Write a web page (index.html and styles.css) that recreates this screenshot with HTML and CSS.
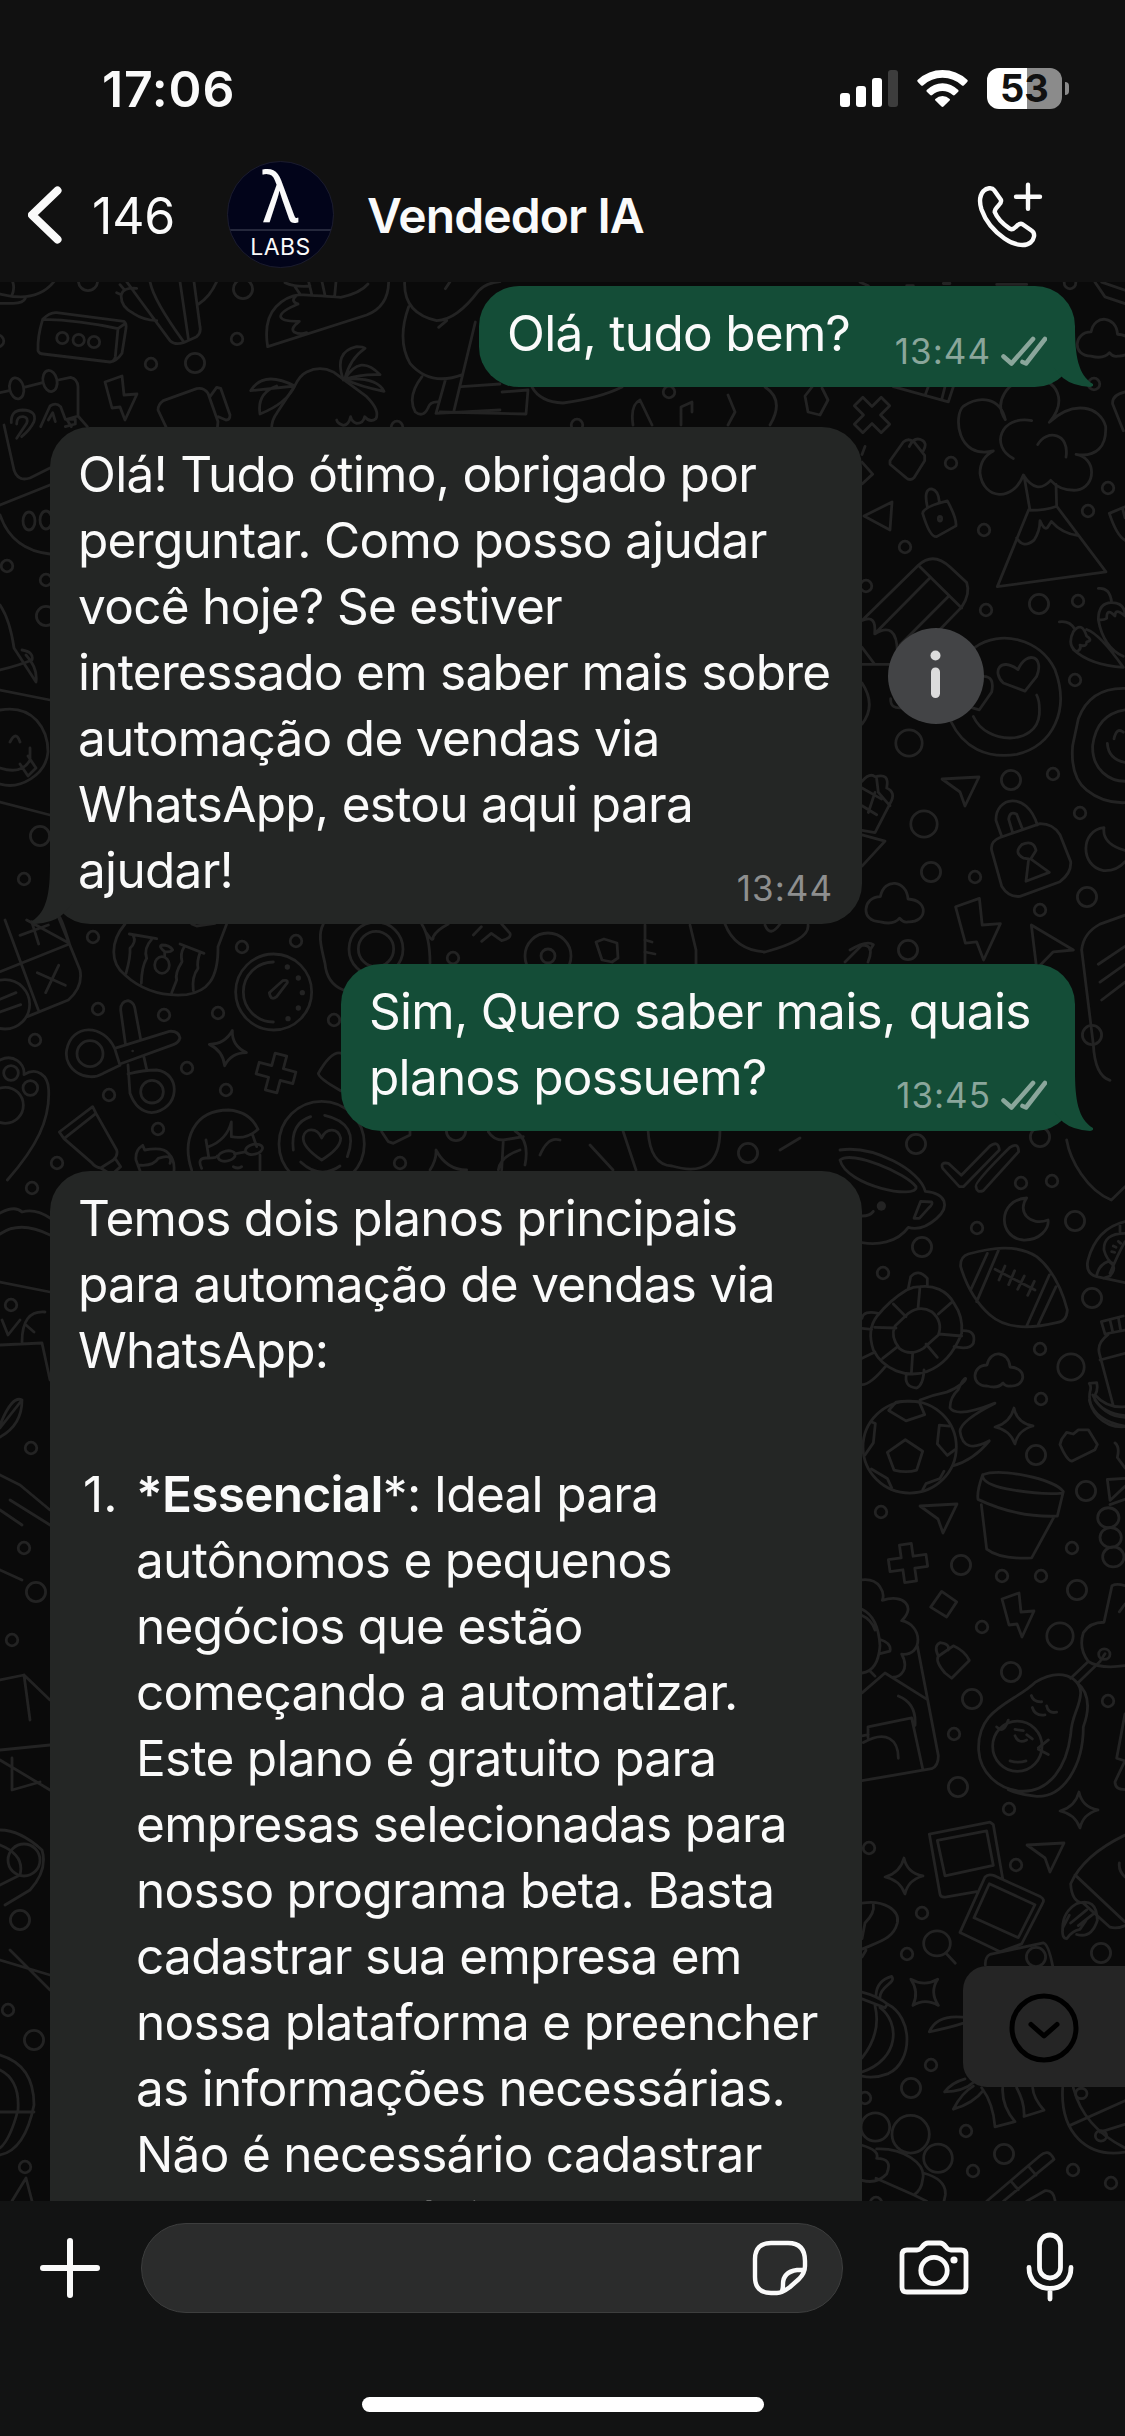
FILE: index.html
```html
<!DOCTYPE html>
<html lang="pt-BR">
<head>
<meta charset="utf-8">
<title>Vendedor IA</title>
<link rel="stylesheet" href="styles.css">
</head>
<body>
<div class="top">
  <div class="status">
    <span class="clock">17:06</span>
    <div class="status-icons">
      <svg class="signal" viewBox="0 0 58 37"><rect x="0" y="23" width="10" height="14" rx="3"/><rect x="16" y="16" width="10" height="21" rx="3"/><rect x="32" y="8" width="10" height="29" rx="3"/><rect x="48" y="0" width="10" height="37" rx="3" fill="#3d3d3d"/></svg>
      <svg class="wifi" viewBox="0 0 51 37"><path d="M.8 9.8Q-.3 10.8.8 12L4.200 15.400Q5.200 16.200 6.300 15.200Q14.300 7.700 25.500 7.700T44.700 15.200Q45.800 16.200 46.800 15.400L50.200 12Q51.300 10.800 50.200 9.800Q39.500 0 25.500 0T.8 9.800Z"/><path d="M9.700 20.100Q9 21 9.800 21.800L13.200 25.100Q14.200 25.900 15.200 25Q19.700 21 25.500 21T35.800 25Q36.800 25.900 37.800 25.100L41.200 21.800Q42 21 41.300 20.100Q34.300 13.200 25.500 13.200T9.700 20.100Z"/><path d="M18.300 28.900Q17.700 29.900 18.400 30.600L24.500 36.500Q25.500 37.300 26.500 36.500L32.600 30.600Q33.300 29.900 32.700 28.900Q29.500 26 25.500 26T18.300 28.900Z"/></svg>
      <div class="battery"><span>53</span></div>
    </div>
  </div>
  <header class="header">
    <svg class="back" viewBox="0 0 34 58"><path d="M29.500 4.500 4 29 29.500 53.500"/></svg>
    <span class="count">146</span>
    <div class="avatar"><span class="lambda">λ</span><span class="labs">LABS</span></div>
    <h1>Vendedor IA</h1>
    <svg class="call" viewBox="0 0 66 66"><path d="M6.500 9C9.500 6 15 5 17 8L23.700 17.500C26.500 22 17.500 24.500 17.700 30C20.500 37 27 42.800 33 46.800C38.500 49.500 40 39.500 45.500 42.200L54.500 48.500C59 51.500 57 57.500 53.500 60.500C47.500 65.500 36 62.500 27.500 56.500C17.500 49.500 8.500 39 4.500 27.500C2.300 20.500 2.200 14 6.500 9ZM51 2.700V26.700M39 14.800H63"/></svg>
  </header>
</div>

<main class="chat">
  <svg class="wallpaper" viewBox="0 282 1125 1919">
    <defs>
      <circle id="s" r="5.800"/><circle id="m" r="9.600"/><circle id="l" r="13.200"/>
      <path id="star" d="M0-18Q3-3 19 0Q4 4 1 18Q-4 4-19 1Q-4-3 0-18Z"/>
      <path id="plus" d="M-6-19H6V-6H19V6H6V19H-6V6H-19V-6H-6Z"/>
      <path id="cloud" d="M-13 14C-30 14-28-7-13-7C-10-23 9-21 10-5C28-4 26 15 10 14Q6 15 3 11Q-2 17-13 14Z"/>
      <path id="bolt" d="M-16-18 1-24 3-5 16-6 4 20-1 7-9 8Z"/>
      <path id="plane" d="M-19-11 18-13 4 16-1 2Z"/>
    </defs>
    <g>
      <use href="#s" x="951" y="463"/><use href="#s" x="905" y="547"/><use href="#s" x="984" y="530"/><use href="#s" x="1108" y="488"/><use href="#s" x="1088" y="511"/><use href="#s" x="866" y="586"/><use href="#s" x="986" y="610"/><use href="#s" x="1078" y="601"/><use href="#m" x="1039" y="604"/><use href="#s" x="1075" y="680"/><use href="#l" x="909" y="743"/><use href="#m" x="1011" y="780"/><use href="#s" x="1053" y="774"/><use href="#s" x="1080" y="813"/><use href="#l" x="924" y="824"/><use href="#m" x="931" y="872"/><use href="#s" x="975" y="877"/><use href="#m" x="1087" y="897"/><use href="#s" x="1040" y="910"/><use href="#m" x="908" y="950"/><use href="#s" x="1094" y="384"/><use href="#s" x="1070" y="283"/>
      <use href="#m" x="916" y="1144"/><use href="#m" x="1040" y="1137"/><use href="#s" x="1021" y="1183"/><use href="#s" x="1052" y="1181"/><use href="#m" x="1075" y="1221"/><use href="#s" x="977" y="1228"/><use href="#m" x="922" y="1247"/><use href="#s" x="883" y="1273"/><use href="#m" x="1092" y="1298"/><use href="#s" x="1040" y="1349"/><use href="#l" x="1071" y="1367"/><use href="#s" x="1041" y="1399"/><use href="#m" x="1092" y="1035"/>
      <use href="#m" x="1036" y="1455"/><use href="#m" x="1086" y="1491"/><use href="#s" x="881" y="1512"/><use href="#m" x="961" y="1565"/><use href="#s" x="1072" y="1548"/><use href="#s" x="1002" y="1576"/><use href="#s" x="1041" y="1576"/><use href="#m" x="1077" y="1590"/><use href="#s" x="982" y="1627"/><use href="#l" x="1060" y="1636"/><use href="#m" x="1011" y="1672"/><use href="#m" x="972" y="1699"/><use href="#s" x="1108" y="1701"/><use href="#s" x="954" y="1734"/><use href="#m" x="958" y="1787"/><use href="#s" x="1009" y="1809"/><use href="#s" x="869" y="1848"/><use href="#s" x="1016" y="1865"/><use href="#s" x="922" y="1913"/><use href="#s" x="907" y="1954"/><use href="#m" x="1101" y="1953"/><use href="#s" x="931" y="2065"/><use href="#m" x="911" y="2088"/><use href="#s" x="865" y="2098"/><use href="#s" x="966" y="2131"/><use href="#m" x="1004" y="2154"/><use href="#s" x="973" y="2171"/><use href="#s" x="1073" y="2170"/><use href="#s" x="1111" y="2183"/><use href="#m" x="1036" y="1957"/><use href="#s" x="876" y="2203"/>
      <use href="#s" x="93" y="937"/><use href="#s" x="242" y="947"/><use href="#s" x="296" y="941"/><use href="#s" x="453" y="958"/><use href="#s" x="98" y="1009"/><use href="#s" x="164" y="1015"/><use href="#s" x="218" y="1013"/><use href="#s" x="334" y="1020"/><use href="#s" x="35" y="1040"/><use href="#s" x="187" y="1068"/><use href="#s" x="226" y="1090"/><use href="#s" x="109" y="1095"/><use href="#s" x="158" y="1129"/><use href="#s" x="400" y="1163"/><use href="#s" x="57" y="1163"/><use href="#m" x="748" y="1153"/><use href="#m" x="456" y="1131"/>
      <use href="#m" x="88" y="281"/><use href="#m" x="243" y="289"/><use href="#s" x="237" y="339"/><use href="#s" x="151" y="364"/><use href="#m" x="195" y="363"/><use href="#s" x="-2" y="341"/><use href="#s" x="669" y="392"/><use href="#s" x="397" y="427"/><use href="#s" x="577" y="425"/><use href="#s" x="7" y="566"/><use href="#s" x="24" y="879"/><use href="#m" x="40" y="836"/><use href="#m" x="46" y="616"/><use href="#s" x="46" y="580"/><use href="#s" x="32" y="1188"/><use href="#s" x="11" y="1305"/><use href="#s" x="31" y="1448"/><use href="#s" x="24" y="1548"/><use href="#m" x="36" y="1592"/><use href="#s" x="12" y="1640"/><use href="#m" x="20" y="1920"/><use href="#s" x="8" y="2010"/><use href="#s" x="25" y="2167"/><use href="#m" x="34" y="2040"/>
      <use href="#star" x="1014" y="1426"/><use href="#star" x="1079" y="1810"/><use href="#star" x="904" y="1876"/><use href="#star" transform="translate(228 1048) rotate(14)"/><use href="#star" transform="translate(925 1992) rotate(45)"/>
      <use href="#plus" transform="translate(276 1073) rotate(15)"/><use href="#plus" transform="translate(908 1563) rotate(-8)"/><use href="#plus" transform="translate(872 415) rotate(45)"/>
      <use href="#cloud" transform="translate(1000 1372)"/><use href="#cloud" transform="translate(896 905) scale(1.200)"/><use href="#cloud" transform="translate(1106 340) scale(1.150)"/>
      <use href="#bolt" transform="translate(121 400)"/><use href="#bolt" transform="translate(1018 1617)"/><use href="#bolt" transform="translate(978 932) scale(1.400)"/>
      <use href="#plane" x="961" y="790"/><use href="#plane" transform="translate(1046 1856)"/><use href="#plane" transform="translate(939 1517)"/><path d="M864 516 892 502 890 530Z"/>
    </g>

    <!-- upper left doodles -->
    <g transform="translate(0 280) scale(.33333)">
      <path d="M128 118Q112 170 114 212Q118 222 130 222L330 246Q344 244 346 230L354 146Q240 120 128 118Q150 96 170 98L372 124Q380 130 378 145L366 220Q350 244 330 246M354 146 376 130"/>
      <circle cx="187" cy="174" r="17"/><circle cx="236" cy="180" r="17"/><circle cx="282" cy="186" r="17"/>
      <path d="M0 338 28 332M72 322 128 308M175 300 212 292Q232 296 234 320V408L262 440M234 408 200 418 214 440"/>
      <ellipse cx="50" cy="325" rx="21" ry="32" transform="rotate(-12 50 325)"/><ellipse cx="150" cy="303" rx="21" ry="32" transform="rotate(-12 150 303)"/>
      <path d="M34 428Q32 390 68 390Q112 392 102 425Q90 450 65 470M50 432Q50 408 70 410Q86 412 80 430L50 475M122 440 150 378Q168 366 182 380L196 418H226V432L196 440M145 420 158 398 166 425"/>
      <path d="M500 445 474 390Q474 374 490 362L590 326Q612 322 624 340L654 425 652 445M630 350 650 322 662 325 690 405Q690 420 678 420L655 410"/>
      <path d="M380 5 420 60 510 182Q525 196 550 188L590 170Q604 158 600 140L582 5M450 5Q460 60 550 184M540 5 565 176M350 38 364 44Q360 80 400 100 430 120 470 122M364 44Q370 22 410 25M372 28 360 14M596 72Q630 50 650 5"/>
      <path d="M803 200Q790 120 828 80Q860 48 900 44Q1000 50 1022 52Q1080 40 1104 12M803 200 1100 105Q1165 80 1166 5M894 72Q870 64 888 48M894 72Q840 95 842 110T898 124Q870 145 882 156Q900 165 920 158M855 8Q885 22 930 18M885 20 900 42M926 5 935 42M966 5 975 46M1008 5 1004 48"/>
      <path d="M815 445Q815 420 830 400L884 318Q900 285 920 276Q960 256 1000 276L1100 350Q1140 390 1128 416 1110 430 1094 410 1090 430 1070 430 1055 425 1052 410 1046 436 1030 436 1012 430 1010 420"/>
      <path d="M884 318Q790 270 752 332Q820 325 884 318Q860 370 780 402Q770 340 830 318M1030 300Q1000 215 1070 200 1090 200 1095 205Q1050 235 1034 298M1034 298Q1080 220 1140 284Q1080 282 1034 298Q1130 290 1152 334Q1080 320 1034 298"/>
      <path d="M1214 5Q1210 100 1310 122Q1370 120 1436 32Q1460 8 1500 5M1226 80Q1190 180 1230 250Q1290 320 1388 284M1426 126 1362 392M1340 122 1316 142M1384 320 1500 312M1336 300 1308 400 1500 390M1266 290Q1220 350 1246 396 1270 414 1284 384 1290 364 1316 366M1350 5 1336 26"/>
      <path d="M0 70H40Q70 70 76 55M0 42Q110 70 162 5M38 5Q45 25 36 45"/>
    </g>
    <!-- doodles under the first message -->
    <path d="M502 392 528 390 526 414 440 412M532 387Q540 402 563 403 600 398 622 387M633 425Q630 405 640 400L652 425M681 425V407L692 402V412M728 425 735 412 728 395M765 387Q785 400 770 425M812 387 805 396 808 412 820 415 828 400 822 388"/>

    <!-- left strip beside the first reply -->
    <g>
      <path d="M0 505 50 485M0 515Q12 550 50 554"/><ellipse cx="29" cy="521" rx="6" ry="9"/><ellipse cx="46" cy="520" rx="6" ry="9"/>
      <path d="M4 425 14 470Q18 482 30 478L50 468M0 605Q10 620 14 648L36 682Q38 668 26 655M0 670Q20 665 32 660 34 652 22 650M0 690 50 700M0 710C34 704 48 730 48 752C46 775 20 790 0 784M0 768Q22 775 30 760V748M10 742Q16 730 20 742M20 764 28 776 36 768 28 756M0 802 50 815"/>
    </g>

    <!-- doodles between the first reply and the second message -->
    <g transform="translate(0 920) scale(.33333)">
      <path d="M15 0 115 270M80 0 208 70Q180-20 175-10L240 150Q250 200 205 240L82 290M0 155 208 72M60 46 145 15M95 5 116 72M112 158 196 196M176 136 137 218M0 238 48 218M0 276 62 254"/>
      <circle cx="15" cy="253" r="74"/>
      <path d="M375 12C330 65 330 130 375 165C430 215 490 230 560 224C620 215 655 180 654 80L680 12M388 42 470 56M400 48Q410 65 390 85 392 110 378 160M455 58Q430 85 440 115 425 140 424 190M540 72 612 100M552 82Q540 100 546 125 524 160 530 180L515 218M600 98Q590 125 594 145 575 170 580 212M575 12 590 18 645 10"/>
      <ellipse cx="486" cy="135" rx="22" ry="25"/><path d="M494 110V95Q475 80 485 75 510 75 518 90 510 98 494 95"/>
      <circle cx="821" cy="216" r="114"/><path d="M820 126A90 90 0 0 0 820 306M808 218 848 182Q864 178 862 188L830 230Q812 244 808 218Z"/>
      <g class="solid"><circle cx="862" cy="141" r="8"/><circle cx="895" cy="174" r="8"/><circle cx="907" cy="218" r="8"/><circle cx="895" cy="264" r="8"/><circle cx="864" cy="296" r="8"/><circle cx="398" cy="393" r="4"/></g>
      <path d="M344 385 508 334Q536 332 540 354 536 368 520 374L360 432M376 370 362 270Q362 244 384 242 400 246 404 262L422 358M384 435 390 520Q410 575 455 578C540 570 545 460 470 450Q430 450 384 462M432 412 440 448M344 385C310 310 215 310 200 390C190 450 260 490 310 460L360 436Z"/>
      <circle cx="270" cy="401" r="39"/><circle cx="456" cy="515" r="34"/>
      <circle cx="33" cy="459" r="22"/><circle cx="91" cy="504" r="22"/><circle cx="16" cy="556" r="54"/><path d="M0 420C40 400 75 430 72 464C110 440 145 465 146 510C150 600 110 680 22 780M178 636 278 560 288 580 192 656ZM288 580 350 690Q355 705 340 720L302 744Q285 742 275 728L192 656M345 715 362 740 345 755M302 744 320 755M408 720Q405 690 428 676L434 690Q490 680 505 700 525 720 522 752M408 720 420 752M415 735Q460 740 475 715 520 700 510 730"/>
      <path d="M575 750C545 660 580 570 686 570Q750 575 774 628 740 660 694 650V606Q680 660 626 680M618 660 626 710M758 645 770 680M780 705V750M605 745Q590 715 618 714 650 715 652 708"/><ellipse cx="680" cy="708" rx="26" ry="15" transform="rotate(-12 680 708)"/><ellipse cx="762" cy="688" rx="26" ry="15" transform="rotate(-12 762 688)"/><path d="M704 702 736 696M700 740Q715 748 725 740"/>
      <circle cx="965" cy="672" r="128"/><path d="M880 690Q870 610 932 590M974 586Q1080 610 1042 710M902 726Q960 780 1020 738M965 720Q905 680 910 650C915 625 950 620 965 654C980 620 1015 625 1022 655Q1022 685 965 720Z"/>
      <path d="M1030 210Q980 190 975 130C960 70 955 40 970 12M1265 12Q1290 50 1290 130M1280 40Q1300 70 1300 50 1310 30 1345 12"/><circle cx="1128" cy="87" r="81"/><circle cx="1128" cy="87" r="53"/>
      <path d="M1420 45 1444 20M1445 64 1474 40 1505 62Q1535 55 1530 40L1505 12M1025 400Q995 390 955 460 955 475 1022 512M1145 635 1165 665 1180 670 1230 645V632M1290 750Q1310 720 1308 690 1340 750 1400 750M1465 635Q1480 660 1510 660L1570 650M1510 660 1505 750M1495 750Q1500 710 1560 690"/>
    </g>
    <g>
      <path d="M515 1131Q530 1140 525 1165M540 1155Q548 1136 560 1140M590 1145 613 1170M623 1131 636 1170M648 1130Q650 1165 672 1166 720 1180 720 1130M780 1150 800 1138M725 924Q735 950 765 952 810 940 808 925M690 925 696 950 696 964M645 940 652 942M645 952 655 954M845 962 862 945Q875 945 868 962M765 925Q770 938 780 924"/>
      <circle cx="548" cy="956" r="23"/><circle cx="548" cy="956" r="7"/><path d="m596 942 8-3 13 4 1 15-6 4-10-2ZM645 966V925"/>
    </g>

    <!-- right column beside the first reply -->
    <g transform="translate(840 250) scale(.33333 .44643)">
      <path d="M460 450C350 470 340 370 370 350C420 325 480 330 496 380C460 340 500 295 570 285C660 290 680 340 628 386C700 335 780 350 797 395C800 440 770 465 708 458C770 465 770 530 710 538Q660 540 632 516Q590 550 550 504C520 565 430 560 420 500Q420 465 460 450M520 467C450 440 480 370 575 382M593 436C620 400 690 410 678 464M552 505 570 583Q620 583 650 574L648 525M566 582 472 754 798 721 650 574M530 645Q550 670 582 650 600 630 600 606 612 628 622 622L634 608Q665 635 715 640M150 472 190 430Q205 420 222 430L254 460 254 472 222 510Q210 518 198 510L150 480ZM208 440Q220 420 240 424 265 430 250 450M66 524 98 502 66 475M66 458 75 440M248 590Q250 575 322 562Q350 600 348 618L290 642Q270 645 248 590ZM262 575Q250 535 275 535 295 538 298 564M850 405 818 345Q815 325 855 318"/>
      <circle cx="300" cy="602" r="5"/>
      <path d="M66 830 235 706Q280 675 330 710L380 745Q392 770 365 800L280 865M235 706 365 802M110 855 268 736M180 885 325 776M66 830Q110 815 104 860Q170 830 172 900M66 928H260M66 890 104 928M152 1005Q150 1030 190 1025M66 970Q110 1020 66 1062"/>
      <path d="M405 890C480 850 600 870 645 940C690 1030 640 1110 530 1130C440 1140 370 1115 332 1055M555 988 490 970C455 945 480 910 534 940C560 895 615 910 590 955ZM400 1045C440 1110 590 1110 598 1040Q600 1010 590 997M430 955Q465 955 455 990L418 1030 395 1025"/>
      <path d="M658 833Q690 830 705 850M740 865Q725 830 700 855 680 885 710 900 725 895 720 885 740 890 740 878 760 875 740 865M740 850Q780 860 850 935Q750 930 700 895M775 758Q810 755 815 790M775 828Q775 790 815 790 855 790 855 820 825 800 825 820 800 800 800 825 790 830 775 828Q790 890 850 910M808 590 855 575M808 590Q830 640 855 650M848 580 855 600M855 982Q750 980 715 1050L698 1110Q690 1180 740 1210 790 1240 855 1238M855 1030Q770 1040 758 1110C755 1165 810 1190 855 1190M802 1105Q805 1140 855 1148M822 1095Q830 1068 850 1080"/>
      <path d="M66 1190Q90 1170 105 1180 150 1170 140 1205 170 1215 150 1240L105 1305 66 1300M66 1205 125 1230M66 1245 110 1265M105 1215 85 1260M110 1185 115 1215 150 1245M66 1310 135 1324 66 1380"/>
      <path d="M485 1313 468 1278C465 1225 560 1210 592 1288M518 1305 506 1275Q510 1255 530 1264L548 1298M455 1345Q450 1325 480 1316L600 1285Q640 1285 660 1310L692 1370Q695 1395 660 1415L540 1448Q505 1450 485 1425ZM550 1362Q520 1350 545 1332 580 1320 588 1345L572 1364 628 1394 558 1414 566 1364Z"/>
      <path d="M792 1294C720 1300 720 1380 790 1390Q830 1392 855 1370M792 1294Q785 1330 855 1345M590 1610 574 1512 700 1568 640 1572ZM725 1568Q730 1530 780 1510L855 1490M725 1568 760 1780Q765 1850 810 1860M775 1600 855 1560M780 1640 855 1600M785 1680 855 1640M30 1568Q80 1545 100 1556L90 1568"/>
      <path d="M160 306 325 340 340 306M255 326 265 306M305 335 315 306M765 72 795 105 855 120M785 72 855 90M60 72 85 80M200 80H220M310 75H330M470 77H560"/>
    </g>

    <!-- right column beside the plans reply -->
    <g transform="translate(840 1140) scale(.33333)">
      <path d="M0 30C100 15 240 90 256 154C320 160 330 200 290 235Q245 275 205 262C170 310 110 315 66 308M242 184 275 186Q280 192 265 205L238 235H222ZM0 60C35 30 200 100 228 140C235 180 20 140 0 60M66 228Q90 228 100 214"/>
      <circle cx="124" cy="198" r="14" class="solid"/>
      <path d="M308 85Q300 65 325 70L364 106 450 18Q475 0 478 30L370 140 358 140ZM408 140Q400 130 510 22 535 5 536 35L430 152Q410 160 408 140ZM560 174C470 180 475 295 550 300C600 302 628 265 624 240C570 260 530 215 560 174ZM680 0C690 60 740 150 814 180L855 140"/>
      <path d="M362 380Q360 350 385 342C450 325 530 310 590 350C640 390 665 445 682 510Q680 545 650 548C580 565 500 570 450 525C410 490 380 440 362 380ZM442 340 392 450M475 332 410 485M628 405 560 558M648 440 595 553M465 388 585 450M495 378 477 420M524 392 506 434M553 408 533 448M583 424 563 466"/>
      <path d="M240 440C280 435 320 450 342 490Q370 530 365 580Q330 670 260 695C200 715 130 690 100 630Q80 570 110 530Q150 480 200 450 220 440 240 440ZM205 520Q240 495 275 515 310 545 295 585L250 625Q210 650 178 625 150 590 165 558ZM240 440 234 505M160 492 198 530M334 488 295 522M104 562 168 564M365 588 296 582M128 655 170 622M292 652 258 612M214 702 218 640M205 445 212 410Q235 385 262 415V440M366 572Q410 570 400 610 390 630 342 620M200 700Q190 740 230 744 250 735 252 690M115 520Q70 510 66 535M66 565 95 568M66 655 105 636M66 734Q90 735 136 680"/>
      <path d="M855 245Q770 265 744 360 735 400 770 410L855 428M855 280Q790 280 792 330 800 360 820 372M770 408Q775 375 805 364 835 380 810 408L790 415M855 305Q835 340 810 400M840 275V250M820 318 828 322M815 335 824 337M835 304 842 310"/>
      <path d="M784 545 850 528M784 545 795 582 855 570M810 540 818 575M835 532 842 572M804 584Q770 610 778 640L820 798M780 660 855 640M748 730 770 728Q775 750 765 765 800 805 855 800M748 730Q755 740 750 755C740 810 790 865 855 860M758 765Q790 830 855 832"/>
    </g>
    <g transform="translate(800 1400) scale(.33333 .52299)">
      <ellipse cx="329" cy="90" rx="140" ry="88"/><path d="M262 100 316 76 368 98 350 134Q320 140 282 134ZM266 20 318 40 374 28 358 4Q320 0 288 4ZM195 105 220 82 226 45 215 42M465 95 442 106 412 84 418 48 448 50M214 132 262 150 275 168M432 136 420 150 378 160 368 172"/>
      <path d="M360 0Q400-10 440-15C520-35 500-60 475-20Q450-5 450 15 470 35 585 6 480 40 480 60 490 105 568 78 520 115 458 126"/>
      <path d="M548 143Q530 175 534 190 650 225 772 222L790 175C760 150 600 130 548 143Q545 160 620 170 720 182 788 178M544 200 560 285Q600 305 695 302L760 226M785 75 800 62 820 65 835 57 865 57 892 85 885 95 815 117Q800 115 780 85Z"/>
      <ellipse cx="925" cy="225" rx="32" ry="19"/><ellipse cx="932" cy="263" rx="32" ry="19"/><ellipse cx="940" cy="300" rx="32" ry="19"/><path d="M975 150 922 152 930 192 975 165M868 0Q885 40 975 50M885 0Q910 25 975 30M945 82Q960 90 952 110L975 130M930 200 975 190"/>
      <path d="M425 366 470 386 440 415 392 396ZM186 344C240 340 255 370 247 383C310 370 350 395 305 422C370 430 370 490 305 486C330 515 300 530 280 530M186 400Q235 415 240 470C235 510 210 520 186 522M186 412Q215 420 225 440M240 458Q275 465 270 480L240 485M352 470 415 680Q415 700 395 705L186 728M210 518 225 528M186 560 255 522 380 572M295 566Q350 580 345 622M204 646V625L335 608 368 705M186 642 205 640M190 655C260 630 295 650 295 685 285 705 260 712L186 724M186 797 350 776Q360 785 335 800L186 820M185 442Q200 440 208 445M188 490Q205 488 208 482"/>
      <path d="M415 490Q405 500 435 522L455 532 508 498Q495 480 460 470ZM415 490Q400 470 420 464 450 466 445 478"/>
      <path d="M536 670C530 590 640 580 705 540C780 510 840 530 842 560C840 590 815 600 812 640C800 700 750 750 665 748C590 745 540 710 536 670ZM830 540C870 560 870 590 850 625C850 700 790 760 710 758Q660 755 625 745M812 532 865 500M835 540 900 500 915 485"/>
      <ellipse cx="652" cy="662" rx="74" ry="48"/><path d="M590 625Q610 640 625 612M645 630 670 632M645 642Q655 658 680 650M680 640 697 648M630 690Q655 695 678 690M715 665 745 650M715 668 745 678M694 565Q700 578 725 577M740 585Q745 600 770 597M697 588Q705 605 735 602M865 500Q835 475 850 445 870 425 912 425L936 355Q950 350 975 355M865 500Q900 515 975 508M958 405 975 390M975 600 950 685 975 690 945 730Q945 745 975 745"/><ellipse cx="913" cy="486" rx="17" ry="10"/>
      <path d="M388 830 570 807 580 812 608 915M388 830 420 945Q422 952 440 950L530 940M412 842 560 824 580 890 435 910ZM480 1018 555 912Q565 905 585 910L722 950Q735 955 728 962L665 1040 600 1055ZM522 990 568 925 705 965 655 1028ZM556 1080Q555 1065 570 1060L730 1038Q745 1040 758 1082"/>
      <path d="M975 832C900 855 840 885 812 925Q815 960 850 962L930 1008Q950 1012 975 1005M825 908 975 998M958 885Q955 900 975 912M788 1015Q785 980 830 963 890 950 892 995 875 1030 830 1022M800 1030Q785 1030 788 1010L808 985M800 1030Q815 1015 840 1012L858 995M812 1000 860 975M835 1005 885 980"/>
      <path d="M186 962C250 955 300 975 292 1000C280 1030 240 1035 186 1050M220 965Q225 980 195 1000L186 1030M198 1052 186 1065"/><ellipse cx="411" cy="1039" rx="40" ry="24"/><path d="M438 1058 466 1077"/>
      <path d="M186 1132Q235 1140 262 1155L255 1162 186 1145M228 1138Q230 1110 275 1102C290 1115 240 1120 240 1142M262 1155C340 1180 340 1265 265 1288Q225 1298 186 1293M225 1158Q245 1210 186 1258M240 1162C300 1190 300 1260 186 1285M388 1208Q410 1175 488 1180M388 1208Q450 1200 488 1192M434 1323Q455 1305 495 1298M434 1323Q490 1322 520 1305M460 1356Q485 1325 520 1312M460 1356Q520 1345 550 1320M545 1315Q580 1345 585 1390L645 1380Q605 1350 608 1315M650 1315Q675 1345 672 1370L732 1358Q700 1335 698 1315"/>
      <ellipse cx="226" cy="1390" rx="43" ry="27"/><ellipse cx="332" cy="1404" rx="56" ry="36"/><ellipse cx="414" cy="1450" rx="43" ry="27"/><path d="M186 1425Q240 1435 230 1450 280 1450 260 1480 230 1500 186 1492M230 1432C310 1430 380 1460 368 1490Q365 1510 342 1520L228 1488M370 1478Q440 1490 436 1520L432 1532M342 1520 380 1532M560 1532 720 1445Q745 1430 762 1452L610 1532M632 1493 655 1510M685 1465 708 1482M680 1532 735 1512Q760 1510 765 1530"/>
      <path d="M788 1315C780 1400 860 1450 975 1438M810 1387 975 1340M820 1315Q850 1390 975 1430M900 1400 975 1385"/><ellipse cx="844" cy="1326" rx="17" ry="10"/><ellipse cx="903" cy="1407" rx="17" ry="10"/>
    </g>

    <!-- left strip beside the plans reply -->
    <path d="M0 1213Q15 1205 22 1212 35 1208 50 1218M0 1234Q20 1220 50 1235M0 1282 50 1292M0 1345 42 1343 50 1380M2 1320 8 1335 20 1320M22 1342Q22 1310 45 1312M26 1325 34 1332M0 1425Q12 1395 22 1400 22 1425 0 1437M0 1428 22 1400M0 1475 20 1485 50 1510M0 1510 22 1525M10 1500 50 1525M0 1570 22 1580M0 1680 24 1675 30 1720M0 1750 50 1745M24 1675 50 1700M0 1760 50 1790M12 1758V1790L40 1782M0 1830Q20 1830 42 1850 48 1870 30 1890L5 1905M0 1845Q25 1855 20 1875L0 1885M0 1960 50 1975M10 1950 50 1990M0 2055Q34 2065 34 2105 25 2150 0 2155M0 2070Q20 2080 18 2110 10 2140 0 2148M0 2112H34M12 2201 26 2178 32 2201"/>
    <circle cx="24" cy="1860" r="16"/>
  </svg>

  <article class="bubble out first">
    <p>Olá, tudo bem?</p>
    <span class="meta">13:44<svg class="ticks" viewBox="0 0 46 30"><path d="M2.500 20.500 10.500 27.500 32 3M21.500 26 25 27.500 44 3"/></svg></span>
    <svg class="tail" viewBox="0 0 40 60"><path d="M22 0C22 28 25 48 40 57Q41 59.500 37 60Q20 59 10 51L0 40V0Z"/></svg>
  </article>

  <div class="row">
    <article class="bubble in">
      <p>Olá! Tudo ótimo, obrigado por<br>perguntar. Como posso ajudar<br>você hoje? Se estiver<br>interessado em saber mais sobre<br>automação de vendas via<br>WhatsApp, estou aqui para<br>ajudar!</p>
      <span class="meta">13:44</span>
      <svg class="tail" viewBox="0 0 40 60"><path d="M22 0C22 28 25 48 40 57Q41 59.500 37 60Q20 59 10 51L0 40V0Z"/></svg>
    </article>
    <div class="info"><svg viewBox="0 0 96 96"><circle cx="47.500" cy="27.500" r="5"/><rect x="43" y="39.500" width="9" height="30.500" rx="4.500"/></svg></div>
  </div>

  <article class="bubble out second">
    <p>Sim, Quero saber mais, quais<br>planos possuem?</p>
    <span class="meta">13:45<svg class="ticks" viewBox="0 0 46 30"><path d="M2.500 20.500 10.500 27.500 32 3M21.500 26 25 27.500 44 3"/></svg></span>
    <svg class="tail" viewBox="0 0 40 60"><path d="M22 0C22 28 25 48 40 57Q41 59.500 37 60Q20 59 10 51L0 40V0Z"/></svg>
  </article>

  <article class="bubble in plans">
    <p>Temos dois planos principais<br>para automação de vendas via<br>WhatsApp:</p>
    <div class="item">
      <span class="num">1.</span>
      <p><b>*Essencial</b>*: Ideal para<br>autônomos e pequenos<br>negócios que estão<br>começando a automatizar.<br>Este plano é gratuito para<br>empresas selecionadas para<br>nosso programa beta. Basta<br>cadastrar sua empresa em<br>nossa plataforma e preencher<br>as informações necessárias.<br>Não é necessário cadastrar<br>cartão de crédito.</p>
    </div>
  </article>

  <div class="jump"><svg viewBox="0 0 70 70"><circle cx="35" cy="35" r="32"/><path d="M22 31.500 35 43 48 31.500"/></svg></div>
</main>

<footer class="footer">
  <div class="composer">
    <svg class="add" viewBox="0 0 60 60"><path d="M30 3V57M3 30H57"/></svg>
    <div class="field"><svg viewBox="0 0 56 56"><path d="M19 3H36Q53 3 53 21V26Q53 33 47 39L38 47Q30 53 25 53H19Q3 53 3 37V19Q3 3 19 3ZM52 30H45Q31 32 31 44Q31 49 30 51"/></svg></div>
    <svg class="camera" viewBox="0 0 70 56"><path d="M3 15Q3 10 8 10H18Q21 10 23 7Q26 3 29 3H41Q44 3 47 7Q49 10 52 10H62Q67 10 67 15V47Q67 52 62 52H8Q3 52 3 47Z"/><circle cx="35" cy="30.500" r="13.200"/><circle class="dot" cx="55" cy="20" r="3.600"/></svg>
    <svg class="mic" viewBox="0 0 48 70"><rect x="13.500" y="3" width="21" height="43" rx="10.500"/><path d="M3 35.500C3 49 12 56.500 24 56.500S45 49 45 35.500M24 57V67"/></svg>
  </div>
  <div class="home"></div>
</footer>
</body>
</html>
```
FILE: styles.css
```css
* { box-sizing: border-box; }
body {
  margin: 0;
  width: 1125px;
  height: 2436px;
  display: flex;
  flex-direction: column;
  overflow: hidden;
  background: #111;
  color: #fafafa;
  font-family: Inter, "Liberation Sans", sans-serif;
}
svg { display: block; flex: none; fill: none; stroke-linecap: round; stroke-linejoin: round; }
h1, p { margin: 0; }

.top { height: 282px; flex: none; background: #111; }
.status {
  height: 148px;
  padding: 58px 63px 0 102px;
  display: flex;
  justify-content: space-between;
  align-items: flex-start;
}
.clock { font-size: 50px; line-height: 62px; font-weight: 600; letter-spacing: 0.8px; }
.status-icons { display: flex; align-items: center; padding-top: 10px; }
.signal { width: 58px; height: 37px; fill: #fff; }
.wifi { width: 51px; height: 37px; margin-left: 19px; fill: #fff; }
.battery {
  position: relative;
  width: 75px;
  height: 41px;
  margin-left: 19px;
  border-radius: 12px;
  background: linear-gradient(90deg, #fff 40px, #8b8b8b 40px);
  color: #111;
  font-size: 38px;
  line-height: 41px;
  font-weight: 700;
  text-align: center;
}
.battery::after {
  content: "";
  position: absolute;
  right: -7px;
  top: 14px;
  width: 4px;
  height: 13px;
  border-radius: 0 4px 4px 0;
  background: #8b8b8b;
}

.header { height: 134px; display: flex; align-items: center; padding: 0 82px 0 28px; }
.back { width: 34px; height: 58px; stroke: #fafafa; stroke-width: 8; }
.count { width: 137px; padding: 2px 0 0 30px; font-size: 50px; letter-spacing: -0.2px; }
.avatar {
  width: 107px;
  height: 107px;
  margin-left: 28px;
  margin-top: -1px;
  border-radius: 50%;
  border: 1px solid #1b1c2e;
  background: linear-gradient(#02041a 67px, #25283c 67px, #25283c 69px, #02041a 69px);
  display: flex;
  flex-direction: column;
  align-items: center;
}
.lambda { height: 67px; font-family: "Noto Sans", sans-serif; font-size: 69px; line-height: 67px; }
.labs { height: 36px; font-size: 23px; line-height: 36px; letter-spacing: 0.5px; }
h1 { margin-left: 33px; font-size: 48px; font-weight: 600; letter-spacing: -0.9px; }
.call { width: 66px; height: 66px; margin-left: auto; stroke: #fafafa; stroke-width: 4.4; }

.chat {
  position: relative;
  height: 1919px;
  flex: none;
  overflow: hidden;
  background: #0a0a0a;
  padding: 4px 50px 0;
  display: flex;
  flex-direction: column;
  align-items: flex-start;
  gap: 40px;
}
.wallpaper { position: absolute; left: 0; top: 0; width: 1125px; height: 1919px; stroke: #232323; stroke-width: 2.8px; }
.wallpaper * { vector-effect: non-scaling-stroke; }
.wallpaper .solid { fill: #232323; stroke: none; }

.bubble {
  position: relative;
  flex: none;
  padding: 14px 28px 21px;
  border-radius: 40px;
  font-size: 49.5px;
  line-height: 66px;
  letter-spacing: -0.7px;
  white-space: nowrap;
}
.out { align-self: flex-end; background: #144d37; }
.in { width: 812px; background: #242625; }
.first { width: 596px; }
.second { width: 734px; }
.meta {
  position: absolute;
  right: 29px;
  bottom: 14px;
  display: flex;
  align-items: center;
  gap: 10px;
  font-size: 35px;
  line-height: 44px;
  letter-spacing: 1px;
  color: #8e8f8f;
}
.out .meta { right: 28px; color: #8aa69b; }
.ticks { width: 46px; height: 30px; stroke: #8aa69b; stroke-width: 4.6; }
.tail { position: absolute; right: -18px; bottom: 0; width: 40px; height: 60px; fill: #144d37; }
.in .tail { right: auto; left: -18px; transform: scaleX(-1); fill: #242625; }
.row { display: flex; align-items: center; gap: 26px; }
.info { position: relative; width: 96px; height: 96px; border-radius: 50%; background: #434446; }
.info svg { fill: #dcdcdc; }
.plans { padding-bottom: 80px; }
.item { display: flex; margin-top: 78px; }
.num { width: 58px; padding-left: 5px; letter-spacing: 0; }
.item b { font-weight: 600; }
.jump {
  position: absolute;
  right: 0;
  bottom: 114px;
  width: 162px;
  height: 121px;
  padding: 27px 0 0 46px;
  border-radius: 24px 0 0 24px;
  background: #252525;
}
.jump svg { width: 70px; height: 70px; stroke: #000; stroke-width: 5; }

.footer { flex: 1; padding-top: 22px; background: #121313; display: flex; flex-direction: column; align-items: center; }
.composer { width: 1125px; height: 90px; padding-left: 40px; display: flex; align-items: center; }
.add { width: 60px; height: 60px; stroke: #fafafa; stroke-width: 6; }
.field {
  width: 702px;
  height: 90px;
  margin-left: 41px;
  padding-right: 34px;
  border: 1px solid #3d3e3e;
  border-radius: 45px;
  background: #2b2c2c;
  display: flex;
  align-items: center;
  justify-content: flex-end;
}
.field svg { width: 56px; height: 56px; stroke: #fafafa; stroke-width: 4.400; }
.camera { width: 70px; height: 56px; margin-left: 56px; stroke: #fafafa; stroke-width: 4.800; }
.camera .dot { fill: #fafafa; stroke: none; }
.mic { width: 48px; height: 70px; margin: -3px 0 0 57px; stroke: #fafafa; stroke-width: 4.800; }
.home { width: 402px; height: 15px; margin-top: 84px; border-radius: 8px; background: #fff; }
```
